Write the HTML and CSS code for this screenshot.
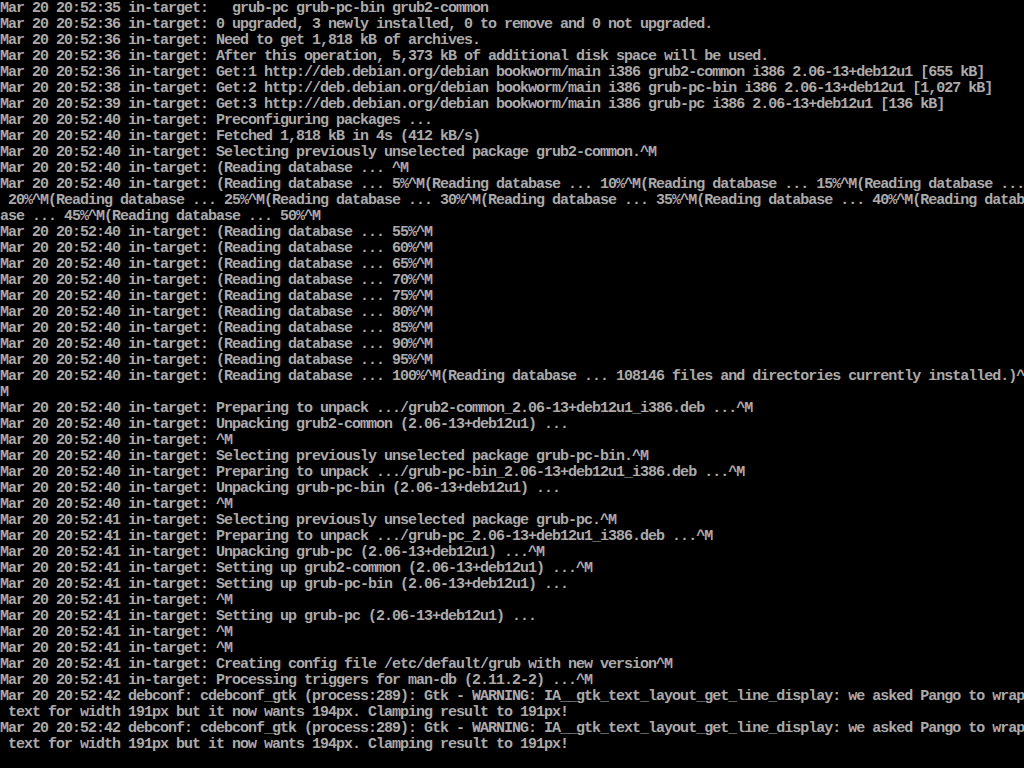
FILE: index.html
```html
<!DOCTYPE html>
<html>
<head>
<meta charset="utf-8">
<link rel="stylesheet" href="styles.css">
</head>
<body>
<pre class="console">Mar 20 20:52:35 in-target:   grub-pc grub-pc-bin grub2-common
Mar 20 20:52:36 in-target: 0 upgraded, 3 newly installed, 0 to remove and 0 not upgraded.
Mar 20 20:52:36 in-target: Need to get 1,818 kB of archives.
Mar 20 20:52:36 in-target: After this operation, 5,373 kB of additional disk space will be used.
Mar 20 20:52:36 in-target: Get:1 http://deb.debian.org/debian bookworm/main i386 grub2-common i386 2.06-13+deb12u1 [655 kB]
Mar 20 20:52:38 in-target: Get:2 http://deb.debian.org/debian bookworm/main i386 grub-pc-bin i386 2.06-13+deb12u1 [1,027 kB]
Mar 20 20:52:39 in-target: Get:3 http://deb.debian.org/debian bookworm/main i386 grub-pc i386 2.06-13+deb12u1 [136 kB]
Mar 20 20:52:40 in-target: Preconfiguring packages ...
Mar 20 20:52:40 in-target: Fetched 1,818 kB in 4s (412 kB/s)
Mar 20 20:52:40 in-target: Selecting previously unselected package grub2-common.^M
Mar 20 20:52:40 in-target: (Reading database ... ^M
Mar 20 20:52:40 in-target: (Reading database ... 5%^M(Reading database ... 10%^M(Reading database ... 15%^M(Reading database ...
 20%^M(Reading database ... 25%^M(Reading database ... 30%^M(Reading database ... 35%^M(Reading database ... 40%^M(Reading datab
ase ... 45%^M(Reading database ... 50%^M
Mar 20 20:52:40 in-target: (Reading database ... 55%^M
Mar 20 20:52:40 in-target: (Reading database ... 60%^M
Mar 20 20:52:40 in-target: (Reading database ... 65%^M
Mar 20 20:52:40 in-target: (Reading database ... 70%^M
Mar 20 20:52:40 in-target: (Reading database ... 75%^M
Mar 20 20:52:40 in-target: (Reading database ... 80%^M
Mar 20 20:52:40 in-target: (Reading database ... 85%^M
Mar 20 20:52:40 in-target: (Reading database ... 90%^M
Mar 20 20:52:40 in-target: (Reading database ... 95%^M
Mar 20 20:52:40 in-target: (Reading database ... 100%^M(Reading database ... 108146 files and directories currently installed.)^
M
Mar 20 20:52:40 in-target: Preparing to unpack .../grub2-common_2.06-13+deb12u1_i386.deb ...^M
Mar 20 20:52:40 in-target: Unpacking grub2-common (2.06-13+deb12u1) ...
Mar 20 20:52:40 in-target: ^M
Mar 20 20:52:40 in-target: Selecting previously unselected package grub-pc-bin.^M
Mar 20 20:52:40 in-target: Preparing to unpack .../grub-pc-bin_2.06-13+deb12u1_i386.deb ...^M
Mar 20 20:52:40 in-target: Unpacking grub-pc-bin (2.06-13+deb12u1) ...
Mar 20 20:52:40 in-target: ^M
Mar 20 20:52:41 in-target: Selecting previously unselected package grub-pc.^M
Mar 20 20:52:41 in-target: Preparing to unpack .../grub-pc_2.06-13+deb12u1_i386.deb ...^M
Mar 20 20:52:41 in-target: Unpacking grub-pc (2.06-13+deb12u1) ...^M
Mar 20 20:52:41 in-target: Setting up grub2-common (2.06-13+deb12u1) ...^M
Mar 20 20:52:41 in-target: Setting up grub-pc-bin (2.06-13+deb12u1) ...
Mar 20 20:52:41 in-target: ^M
Mar 20 20:52:41 in-target: Setting up grub-pc (2.06-13+deb12u1) ...
Mar 20 20:52:41 in-target: ^M
Mar 20 20:52:41 in-target: ^M
Mar 20 20:52:41 in-target: Creating config file /etc/default/grub with new version^M
Mar 20 20:52:41 in-target: Processing triggers for man-db (2.11.2-2) ...^M
Mar 20 20:52:42 debconf: cdebconf_gtk (process:289): Gtk - WARNING: IA__gtk_text_layout_get_line_display: we asked Pango to wrap
 text for width 191px but it now wants 194px. Clamping result to 191px!
Mar 20 20:52:42 debconf: cdebconf_gtk (process:289): Gtk - WARNING: IA__gtk_text_layout_get_line_display: we asked Pango to wrap
 text for width 191px but it now wants 194px. Clamping result to 191px!</pre>
</body>
</html>
```

FILE: styles.css
```css
html, body {
  margin: 0;
  padding: 0;
  background: #000;
  width: 1024px;
  height: 768px;
  overflow: hidden;
}

.console {
  margin: 0;
  padding: 1px 0 0 0;
  color: #aaaaaa;
  font-family: "Liberation Mono", monospace;
  font-size: 15px;
  font-weight: bold;
  letter-spacing: -1px;
  line-height: 16px;
  white-space: pre;
}
```
